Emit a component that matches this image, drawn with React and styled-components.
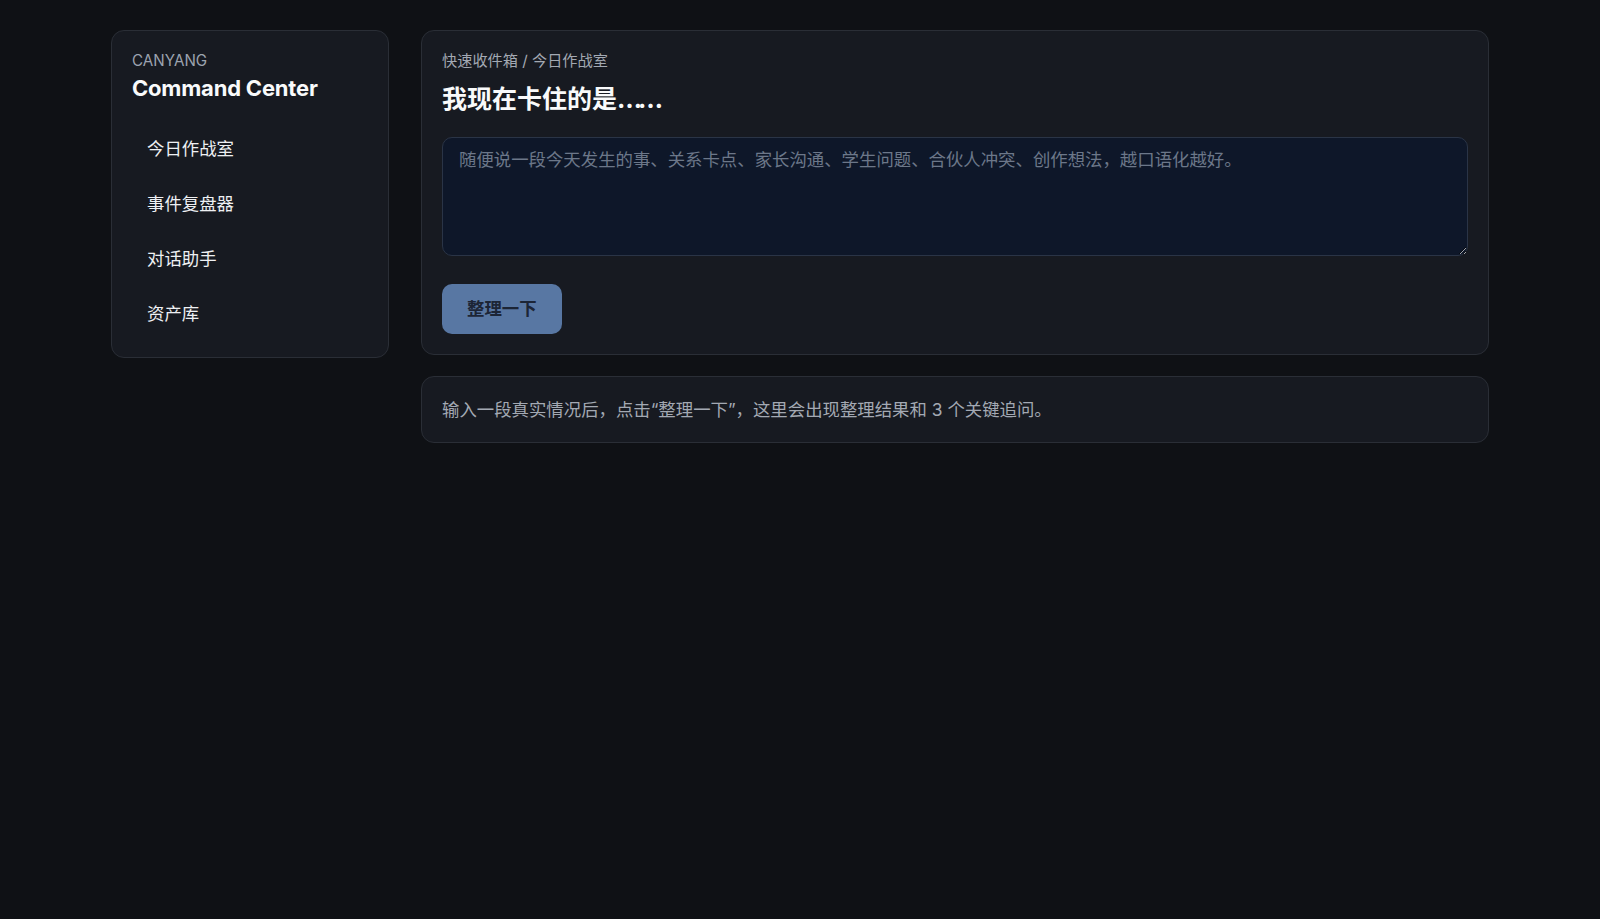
import React, { useState } from "react";
import styled, { createGlobalStyle } from "styled-components";

const navItems = ["今日作战室", "事件复盘器", "对话助手", "资产库"];

function App() {
  const [text, setText] = useState("");
  const [active, setActive] = useState(navItems[0]);

  return (
    <>
      <GlobalStyle />
      <Shell>
        <Sidebar>
          <Brand>CANYANG</Brand>
          <Title>Command Center</Title>
          <Nav>
            {navItems.map((item) => (
              <NavItem key={item} onClick={() => setActive(item)}>
                {item}
              </NavItem>
            ))}
          </Nav>
        </Sidebar>
        <Main>
          <Card>
            <Crumb>快速收件箱 / {active}</Crumb>
            <Heading>
              我现在卡住的是<Dots>……</Dots>
            </Heading>
            <Input
              placeholder="随便说一段今天发生的事、关系卡点、家长沟通、学生问题、合伙人冲突、创作想法，越口语化越好。"
              value={text}
              onChange={(e) => setText(e.target.value)}
            />
            <Actions>
              <SubmitBtn disabled={!text.trim()}>整理一下</SubmitBtn>
            </Actions>
          </Card>
          <HintCard>
            输入一段真实情况后，点击“整理一下”，这里会出现整理结果和 3 个关键追问。
          </HintCard>
        </Main>
      </Shell>
    </>
  );
}

export default App;

const GlobalStyle = createGlobalStyle`
  html, body {
    margin: 0;
    background: #0f1115;
    min-height: 100%;
  }
  body {
    font-family: Inter, "Noto Sans CJK SC", "Noto Sans", sans-serif;
    color: #e5e7eb;
  }
  * {
    box-sizing: border-box;
  }
`;

const Shell = styled.div`
  width: 1378px;
  margin: 0 auto;
  padding-top: 30px;
  display: grid;
  grid-template-columns: 278px 1fr;
  gap: 32px;
  align-items: start;
`;

const Sidebar = styled.aside`
  background: #171a21;
  border: 1px solid #2a2e36;
  border-radius: 13px;
  padding: 20px;
`;

const Brand = styled.div`
  font-size: 15.2px;
  line-height: 20px;
  color: #9ca3af;
`;

const Title = styled.div`
  margin-top: 2px;
  font-size: 22px;
  line-height: 30px;
  font-weight: 700;
  letter-spacing: -0.2px;
  color: #f9fafb;
`;

const Nav = styled.nav`
  margin-top: 23px;
  display: flex;
  flex-direction: column;
  gap: 9px;
`;

const NavItem = styled.div`
  padding: 11px 15px;
  font-size: 17.4px;
  line-height: 24px;
  font-weight: 400;
  color: #eef0f3;
  border-radius: 10px;
  cursor: pointer;

  &:hover {
    background: #1f232c;
  }
`;

const Main = styled.main`
  display: flex;
  flex-direction: column;
  gap: 21px;
`;

const Card = styled.section`
  background: #171a21;
  border: 1px solid #2a2e36;
  border-radius: 13px;
  padding: 20px;
`;

const Crumb = styled.div`
  font-size: 15.2px;
  line-height: 20px;
  color: #a3a9b3;
`;

const Heading = styled.h1`
  margin: 10px 0 0;
  font-size: 25px;
  line-height: 36px;
  font-weight: 700;
  color: #f9fafb;
`;

const Dots = styled.span`
  letter-spacing: -0.16em;
`;

const Input = styled.textarea`
  display: block;
  width: 100%;
  height: 119px;
  margin-top: 20px;
  padding: 10px 16px;
  background: #0e1729;
  border: 1px solid #2a3446;
  border-radius: 10px;
  color: #e5e7eb;
  font-family: inherit;
  font-size: 17.4px;
  line-height: 24px;
  resize: vertical;
  outline: none;
  color-scheme: dark;

  &::placeholder {
    color: #6c7789;
  }
`;

const Actions = styled.div`
  margin-top: 28px;
  display: flex;
`;

const SubmitBtn = styled.button`
  padding: 13px 25px;
  border: none;
  border-radius: 10px;
  background: #3b82f6;
  color: #0b1220;
  font-family: inherit;
  font-size: 17.4px;
  line-height: 23.5px;
  font-weight: 600;
  cursor: pointer;

  &:disabled {
    background: #5877a3;
    color: #1c2536;
    cursor: not-allowed;
  }
`;

const HintCard = styled.section`
  background: #171a21;
  border: 1px solid #2a2e36;
  border-radius: 13px;
  padding: 20px;
  font-size: 17.4px;
  line-height: 25px;
  color: #a3a9b3;
`;
